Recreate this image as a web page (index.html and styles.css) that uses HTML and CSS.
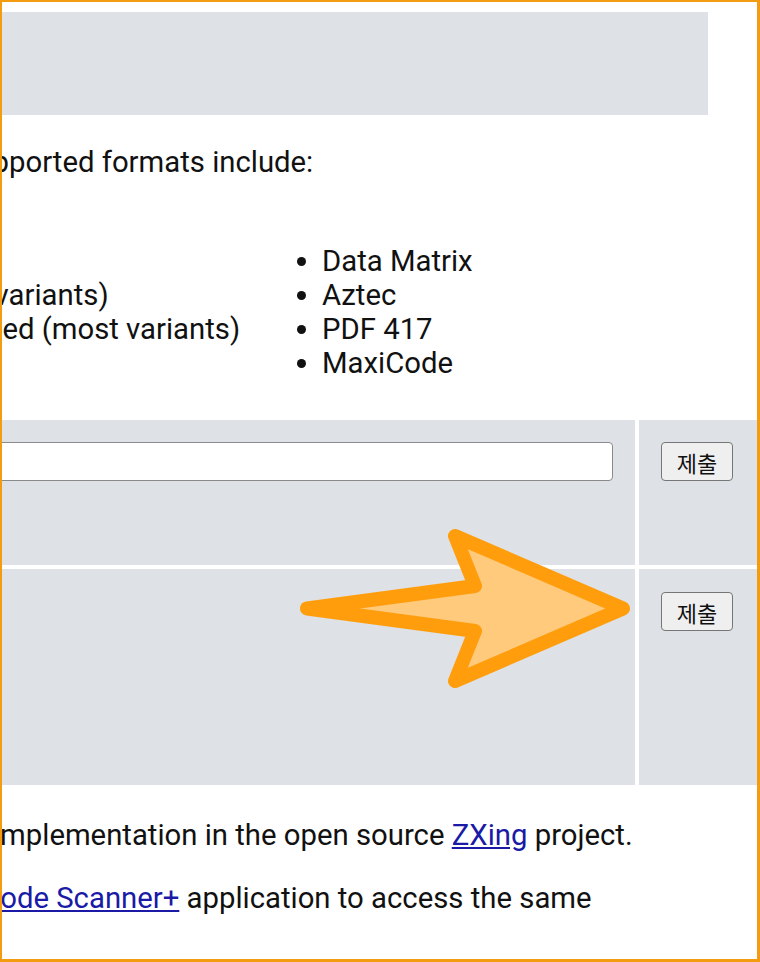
FILE: index.html
```html
<!DOCTYPE html>
<html lang="en">
<head>
<meta charset="utf-8">
<title>ZXing Decoder Online</title>
<link rel="stylesheet" href="styles.css">
</head>
<body>
<div class="frame">
  <div class="banner"></div>
  <p class="intro">Supported formats include:</p>
  <div class="formats">
    <ul class="fmt fmt-1d">
      <li>RSS-14 (all variants)</li>
      <li>RSS Expanded (most variants)</li>
    </ul>
    <ul class="fmt fmt-2d">
      <li>Data Matrix</li>
      <li>Aztec</li>
      <li>PDF 417</li>
      <li>MaxiCode</li>
    </ul>
  </div>
  <form class="scan">
    <div class="cell cell-main"><input class="url" type="text" name="u"></div>
    <div class="cell cell-side"><button class="btn" type="button">제출</button></div>
    <div class="cell cell-main"></div>
    <div class="cell cell-side cell-low"><button class="btn" type="button">제출</button></div>
  </form>
  <p class="note note-1">implementation in the open source <a href="#">ZXing</a> project.</p>
  <p class="note note-2"><a href="#">Barcode Scanner+</a> application to access the same</p>
</div>
<svg class="arrow" width="760" height="962" viewBox="0 0 760 962" aria-hidden="true">
  <polygon points="307,608.5 475,586 455,536 623,608.5 455,681 475,631" fill="#ffca7c" stroke="#ff9d0c" stroke-width="14" stroke-linejoin="round"/>
</svg>
</body>
</html>
```
FILE: styles.css
```css
html, body {
  margin: 0;
  padding: 0;
  background: #ffffff;
}

body {
  font-family: Roboto, "Noto Sans", "Liberation Sans", sans-serif;
  color: #111111;
}

.frame {
  position: relative;
  box-sizing: border-box;
  width: 760px;
  height: 962px;
  border: 2px solid #f39c12;
  border-right-width: 3px;
  border-bottom-width: 3px;
  overflow: hidden;
  font-size: 29.3px;
  line-height: 34px;
}

.banner {
  margin-top: 10px;
  width: 706px;
  height: 103px;
  background: #dee2e6;
}

.intro {
  margin: 30px 0 0 -43px;
  white-space: nowrap;
}

.formats {
  display: flex;
  align-items: center;
  margin-top: 65px;
}

.fmt {
  box-sizing: border-box;
  margin: 0;
  padding: 0 0 0 48px;
  white-space: nowrap;
  list-style: disc outside;
}

.fmt-1d {
  margin-left: -204px;
  width: 476px;
  flex: none;
}

.fmt-2d {
  flex: none;
}

.scan {
  display: grid;
  grid-template-columns: 731px 130px;
  grid-template-rows: 145px 216px;
  gap: 4px;
  margin: 40px 0 0 -98px;
}

.cell {
  box-sizing: border-box;
  background: #dee2e6;
  padding: 22px;
}

.cell-low {
  padding-top: 23px;
}

.url {
  display: block;
  box-sizing: border-box;
  width: 100%;
  height: 39px;
  margin: 0;
  border: 1.5px solid #8a8a8a;
  border-radius: 4px;
  background: #ffffff;
}

.btn {
  display: block;
  box-sizing: border-box;
  width: 72px;
  height: 39px;
  padding: 0;
  margin: 0;
  font-family: "Noto Sans CJK KR", "Noto Sans", sans-serif;
  font-size: 22px;
  line-height: 1;
  color: #111111;
  border: 1.5px solid #767676;
  border-radius: 4px;
  background: #efefef;
}

.note {
  margin: 0;
  white-space: nowrap;
}

.note-1 {
  margin: 33px 0 0 -9px;
}

.note-2 {
  margin: 29px 0 0 -61px;
}

.note a {
  color: #1a1aa6;
}

.arrow {
  position: absolute;
  left: 0;
  top: 0;
  pointer-events: none;
}
```
